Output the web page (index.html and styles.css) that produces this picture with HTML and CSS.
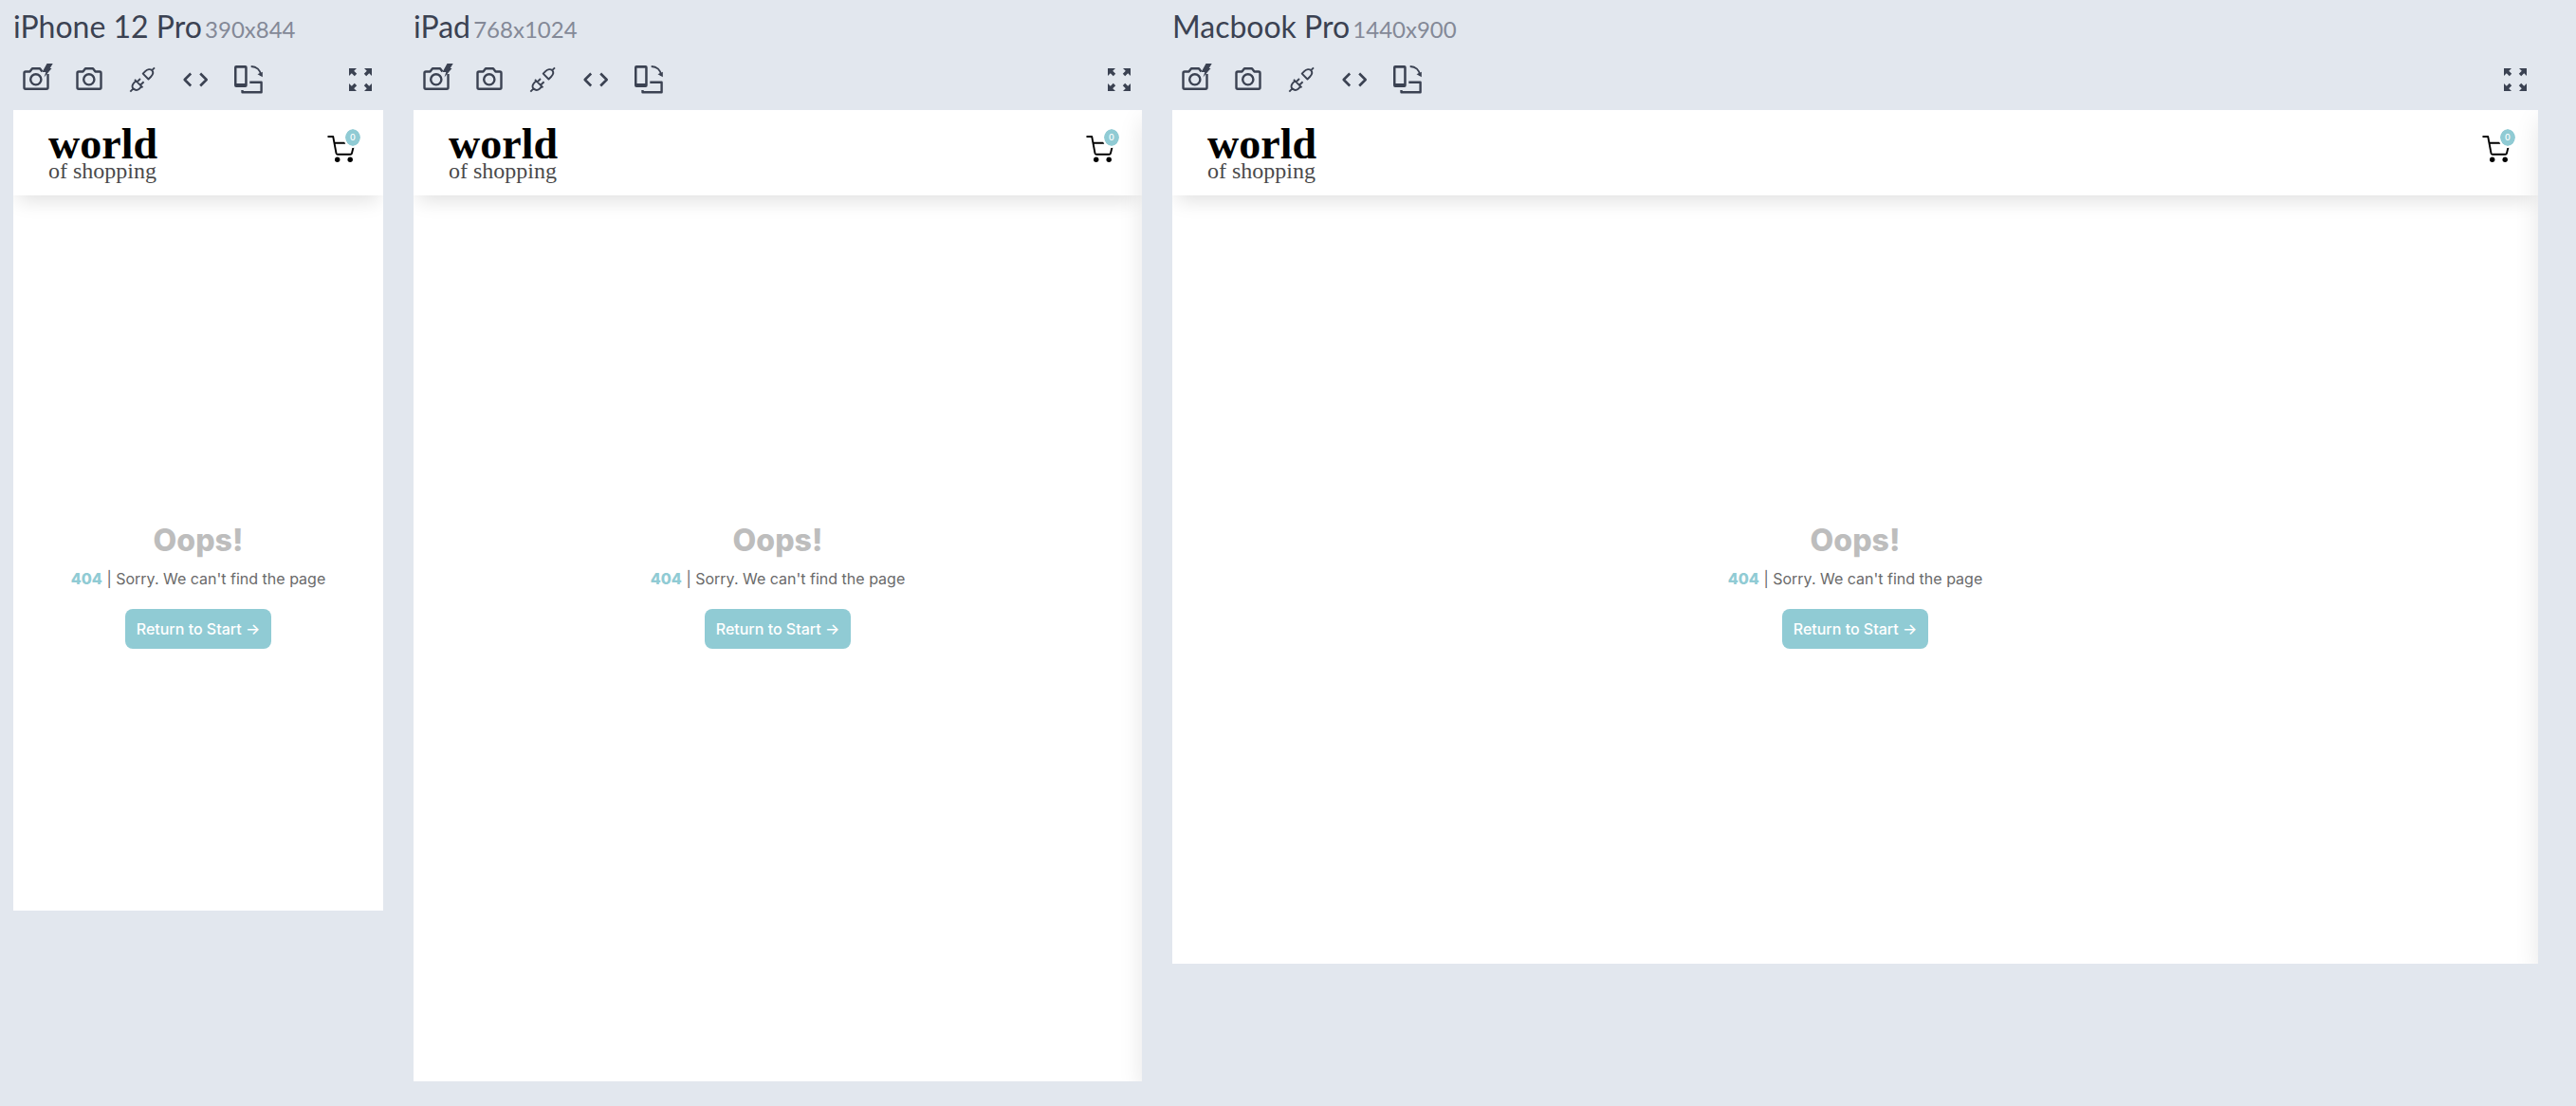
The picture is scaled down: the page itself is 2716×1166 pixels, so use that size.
FILE: index.html
```html
<!DOCTYPE html>
<html lang="en">
<head>
<meta charset="utf-8">
<title>World of Shopping – responsive preview</title>
<link rel="stylesheet" href="styles.css">
</head>
<body>
<svg class="sprite" aria-hidden="true">
  <symbol id="flash-camera" viewBox="0 0 36 36">
    <path class="line" d="M24.500 9.500L22 6.200H14L11.500 9.500H7A1.500 1.500 0 0 0 5.500 11V26.200A1.500 1.500 0 0 0 7 27.700H29A1.500 1.500 0 0 0 30.500 26.200V12"/>
    <circle class="line" cx="17.800" cy="17.800" r="5.600"/>
    <path class="solid" d="M29.500 1H35.700L32.700 6H34.500L26.500 15.500L28.300 10H24.500Z"/>
  </symbol>
  <symbol id="camera" viewBox="0 0 36 36">
    <path class="line" d="M7 9.500H11.500L14 6.200H22L24.500 9.500H29A1.500 1.500 0 0 1 30.500 11V26.200A1.500 1.500 0 0 1 29 27.700H7A1.500 1.500 0 0 1 5.500 26.200V11A1.500 1.500 0 0 1 7 9.500Z"/>
    <circle class="line" cx="17.800" cy="17.800" r="5.600"/>
  </symbol>
  <symbol id="plug" viewBox="0 0 36 36">
    <path class="thin" d="M5.300 30.700L8.800 27.200M10 17.800L18.500 26.300M11.300 19.200L9 21.700C7 24 7 26.500 8.800 27.500C10.500 29.300 13 29.200 15 27.500L17.200 25.200M12.700 20.200L16 17M16.200 23.500L19.600 20.200M18.700 11.700L24.500 17.500L27 15C29.500 12.500 29.700 9.800 28.200 8.200C26.500 6.500 23.600 6.700 21.200 9.200ZM28.200 8.200L31 5.400"/>
  </symbol>
  <symbol id="code" viewBox="0 0 36 36">
    <path class="line" d="M13.200 11.500L6.700 18L13.200 24.500M23.200 11.500L29.700 18L23.200 24.500"/>
  </symbol>
  <symbol id="rotate" viewBox="0 0 36 36">
    <path class="solid" fill-rule="evenodd" d="M5 3H14.700A2 2 0 0 1 16.700 5V24A2 2 0 0 1 14.700 26H5A2 2 0 0 1 3 24V5A2 2 0 0 1 5 3ZM5.500 5.700V22H14.200V5.700Z"/>
    <path class="line" d="M19.300 20.700H31.600V31.300H11.500V29"/>
    <path class="thin" d="M20.700 4C26.500 4.200 30.500 8 31.300 13.500"/>
    <path class="solid" d="M27.500 12.300L32.800 9.800V15.300Z"/>
  </symbol>
  <symbol id="expand" viewBox="0 0 36 36">
    <path class="solid" d="M6 6H14L6 14ZM30 6V14L22 6ZM6 30V22L14 30ZM30 30H22L30 22Z"/>
    <path class="thick" d="M8 8L13 13M28 8L23 13M8 28L13 23M28 28L23 23"/>
  </symbol>
  <symbol id="cart" viewBox="0 0 32 32">
    <path class="line" d="M1.500 4H7.200L10.500 21.500Q10.900 22.700 12 22.700H25.500Q26.700 22.700 27 21.500L28.700 14.500M9 10.700H20.500"/>
    <circle class="solid" cx="11.700" cy="28.300" r="2.700"/>
    <circle class="solid" cx="25.200" cy="28.300" r="2.700"/>
  </symbol>
</svg>

<main class="devices">
  <section class="device phone">
    <h2 class="title">iPhone 12 Pro <small>390x844</small></h2>
    <div class="tools">
      <button aria-label="Full page screenshot"><svg><use href="#flash-camera"/></svg></button>
      <button aria-label="Screenshot"><svg><use href="#camera"/></svg></button>
      <button aria-label="Toggle sync"><svg><use href="#plug"/></svg></button>
      <button aria-label="Inspect code"><svg><use href="#code"/></svg></button>
      <button aria-label="Rotate device"><svg><use href="#rotate"/></svg></button>
      <button class="last" aria-label="Expand"><svg><use href="#expand"/></svg></button>
    </div>
    <article class="screen">
      <header class="bar">
        <a class="logo" href="#"><strong>world</strong><span>of shopping</span></a>
        <a class="cart" href="#" aria-label="Cart"><svg><use href="#cart"/></svg><span class="badge">0</span></a>
      </header>
      <div class="message">
        <h1>Oops!</h1>
        <p><b>404</b> | Sorry. We can't find the page</p>
        <a class="return" href="#">Return to Start →</a>
      </div>
    </article>
  </section>

  <section class="device tablet">
    <h2 class="title">iPad <small>768x1024</small></h2>
    <div class="tools">
      <button aria-label="Full page screenshot"><svg><use href="#flash-camera"/></svg></button>
      <button aria-label="Screenshot"><svg><use href="#camera"/></svg></button>
      <button aria-label="Toggle sync"><svg><use href="#plug"/></svg></button>
      <button aria-label="Inspect code"><svg><use href="#code"/></svg></button>
      <button aria-label="Rotate device"><svg><use href="#rotate"/></svg></button>
      <button class="last" aria-label="Expand"><svg><use href="#expand"/></svg></button>
    </div>
    <article class="screen drawer">
      <header class="bar">
        <a class="logo" href="#"><strong>world</strong><span>of shopping</span></a>
        <a class="cart" href="#" aria-label="Cart"><svg><use href="#cart"/></svg><span class="badge">0</span></a>
      </header>
      <div class="message">
        <h1>Oops!</h1>
        <p><b>404</b> | Sorry. We can't find the page</p>
        <a class="return" href="#">Return to Start →</a>
      </div>
    </article>
  </section>

  <section class="device laptop">
    <h2 class="title">Macbook Pro <small>1440x900</small></h2>
    <div class="tools">
      <button aria-label="Full page screenshot"><svg><use href="#flash-camera"/></svg></button>
      <button aria-label="Screenshot"><svg><use href="#camera"/></svg></button>
      <button aria-label="Toggle sync"><svg><use href="#plug"/></svg></button>
      <button aria-label="Inspect code"><svg><use href="#code"/></svg></button>
      <button aria-label="Rotate device"><svg><use href="#rotate"/></svg></button>
      <button class="last" aria-label="Expand"><svg><use href="#expand"/></svg></button>
    </div>
    <article class="screen drawer">
      <header class="bar">
        <a class="logo" href="#"><strong>world</strong><span>of shopping</span></a>
        <a class="cart" href="#" aria-label="Cart"><svg><use href="#cart"/></svg><span class="badge">0</span></a>
      </header>
      <div class="message">
        <h1>Oops!</h1>
        <p><b>404</b> | Sorry. We can't find the page</p>
        <a class="return" href="#">Return to Start →</a>
      </div>
    </article>
  </section>
</main>
</body>
</html>
```
FILE: styles.css
```css
* {
  box-sizing: border-box;
}

body {
  margin: 0;
  background: #e2e7ee;
  color: #3b4252;
  font-family: Lato, sans-serif;
}

a {
  color: inherit;
  text-decoration: none;
}

.sprite {
  display: none;
}

.line,
.thin,
.thick {
  fill: none;
  stroke: currentColor;
  stroke-width: 2.4;
  stroke-linejoin: round;
}

.thin {
  stroke-width: 1.9;
}

.thick {
  stroke-width: 3.4;
}

#cart .line {
  stroke-width: 1.9;
}

#code .line {
  stroke-width: 2.6;
}

.solid {
  fill: currentColor;
}

/* Devices share the row in proportion to their viewport widths */
.devices {
  display: flex;
  align-items: flex-start;
  gap: 32px;
  padding: 8px 40px 24px 14px;
}

.device {
  flex: 1 1 0;
  min-width: 0;
}

.phone {
  flex-grow: 390;
}

.tablet {
  flex-grow: 768;
}

.laptop {
  flex-grow: 1440;
}

.title {
  margin: 0 0 12px;
  font-size: 32px;
  font-weight: 400;
  line-height: 40px;
  white-space: nowrap;
}

.title small {
  margin-left: -5px;
  color: #848997;
  font-size: 24px;
  line-height: 24px;
}

.tools {
  display: flex;
  gap: 8px;
  margin-bottom: 8px;
}

.tools button {
  display: grid;
  place-items: center;
  width: 48px;
  height: 48px;
  padding: 0;
  border: 0;
  background: none;
  color: inherit;
}

.tools svg {
  width: 36px;
  height: 36px;
}

.tools .last {
  margin-left: auto;
}

.screen {
  position: relative;
  overflow: hidden;
  background: #fff;
  color: #6a6a6a;
  font-family: Inter, sans-serif;
}

.phone .screen {
  aspect-ratio: 390 / 844;
}

.tablet .screen {
  aspect-ratio: 768 / 1024;
}

.laptop .screen {
  aspect-ratio: 1440 / 900;
}

/* Closed side drawer whose shadow shows along the right edge */
.drawer::after {
  content: "";
  position: absolute;
  top: 0;
  left: 100%;
  width: 100%;
  height: 100%;
  box-shadow: 0 10px 24px rgba(0, 0, 0, 0.1);
}

.bar {
  display: flex;
  align-items: flex-start;
  justify-content: space-between;
  height: 90px;
  padding: 16px 28px 0 37px;
  background: #fff;
  box-shadow: 0 10px 20px -5px rgba(0, 0, 0, 0.13);
}

.logo {
  display: flex;
  flex-direction: column;
  color: #4a4a4a;
  font-family: "Liberation Serif", serif;
  font-size: 24px;
  line-height: 16px;
}

.logo strong {
  color: #000;
  font-size: 46px;
  line-height: 40px;
}

.cart {
  position: relative;
  margin-top: 8px;
  color: #000;
}

.cart svg {
  display: block;
  width: 32px;
  height: 32px;
}

.badge {
  position: absolute;
  top: -6px;
  right: -6px;
  width: 20px;
  height: 22px;
  border: 2px solid #fff;
  border-radius: 50%;
  background: #90cbd4;
  background-clip: padding-box;
  color: #fff;
  font-size: 9px;
  font-weight: 500;
  line-height: 18px;
  text-align: center;
}

.message {
  display: flex;
  flex-direction: column;
  align-items: center;
  padding-top: 340px;
  font-size: 16px;
  line-height: 24px;
  white-space: nowrap;
}

.message h1 {
  margin: 0 0 4px;
  color: #bdbdbd;
  font-size: 32px;
  font-weight: 800;
  line-height: 48px;
}

.message p {
  margin: 0 0 20px;
}

.message b {
  color: #90cbd4;
  font-weight: 800;
}

.return {
  padding: 9px 12px;
  border-radius: 8px;
  background: #90cbd4;
  color: #fff;
  font-weight: 500;
}
```
